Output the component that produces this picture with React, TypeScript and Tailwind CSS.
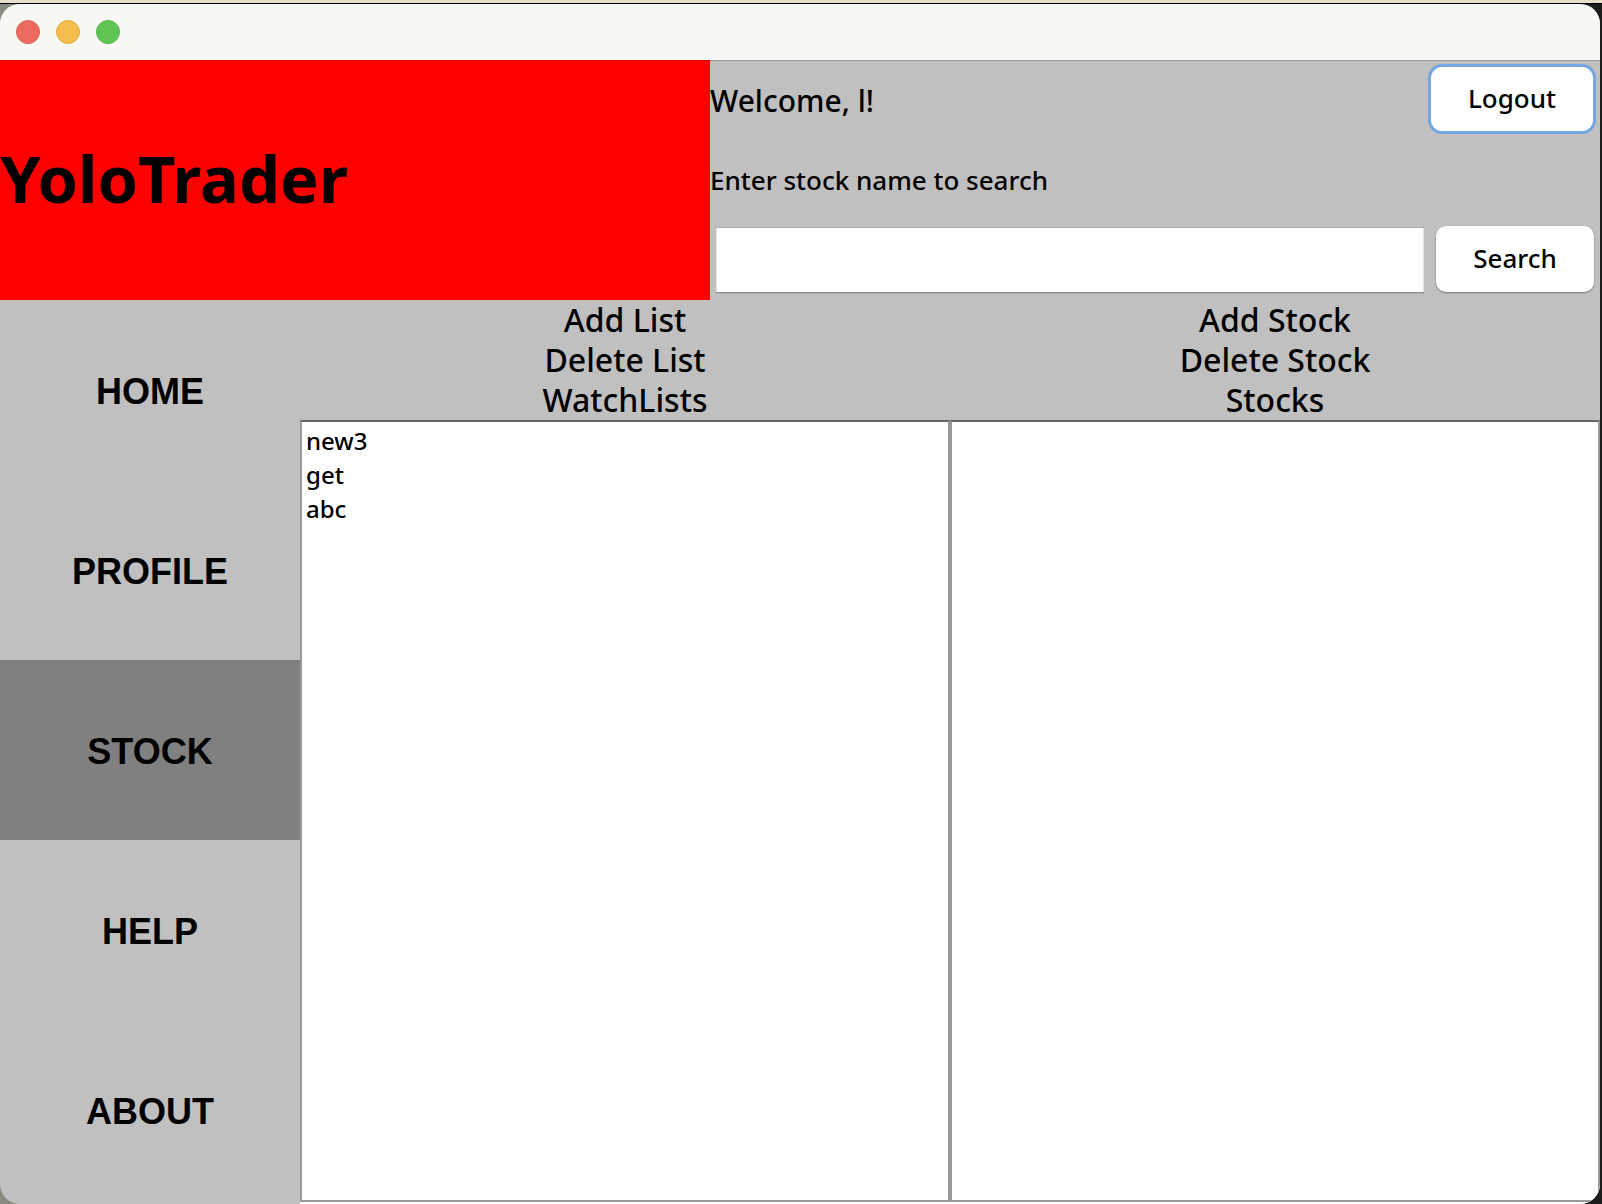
import { useState } from "react";

const navItems = ["HOME", "PROFILE", "STOCK", "HELP", "ABOUT"];
const watchLists = ["new3", "get", "abc"];
const stocks: string[] = [];

function TitleBar() {
  return (
    <div className="flex h-14 shrink-0 items-center gap-4 bg-[#f7f8f3] px-4">
      <button aria-label="Close" className="size-6 rounded-full border border-[#de5f55] bg-[#ec6a5e]" />
      <button aria-label="Minimize" className="size-6 rounded-full border border-[#dfaa45] bg-[#f4bf4f]" />
      <button aria-label="Zoom" className="size-6 rounded-full border border-[#55b347] bg-[#61c554]" />
    </div>
  );
}

function Header() {
  const [query, setQuery] = useState("");
  return (
    <header className="flex h-60 shrink-0 shadow-[inset_0_1px_0_#00000033]">
      <div className="flex w-[710px] shrink-0 items-center bg-[#ff0000] pb-1 shadow-[inset_0_1px_0_#00000033]">
        <h1 className="text-[65px] leading-[80px] font-bold">YoloTrader</h1>
      </div>
      <form className="grid min-w-0 flex-1 grid-rows-3" onSubmit={(e) => e.preventDefault()}>
        <div className="flex items-center justify-between pr-1">
          <p className="pt-0.5 text-[30px] leading-10 font-medium">Welcome, l!</p>
          <button
            type="button"
            className="mb-0.5 h-[70px] w-[168px] rounded-[14px] border-3 border-[#73a7e0] bg-white pb-0.5 text-[26px] leading-8 font-medium"
          >
            Logout
          </button>
        </div>
        <label htmlFor="stock-query" className="flex items-center text-[26px] leading-8 font-medium">
          Enter stock name to search
        </label>
        <div className="flex items-center gap-3 px-1.5">
          <input
            id="stock-query"
            value={query}
            onChange={(e) => setQuery(e.target.value)}
            className="h-16 min-w-0 flex-1 border-x border-[#e4e4e4] bg-white px-2 text-[26px] shadow-[0_1px_0_#8c8c8c,0_2px_0_#b0b0b0,0_-1px_0_#acacac] outline-none"
          />
          <button
            type="submit"
            className="mb-0.5 h-[66px] w-[158px] rounded-[10px] bg-white pb-0.5 text-[26px] leading-8 font-medium shadow-[0_1px_2px_#00000066]"
          >
            Search
          </button>
        </div>
      </form>
    </header>
  );
}

function Sidebar() {
  const [active, setActive] = useState("STOCK");
  return (
    <nav className="flex w-[300px] shrink-0 flex-col">
      {navItems.map((item) => (
        <button
          key={item}
          onClick={() => setActive(item)}
          className={`h-[180px] pt-1 font-['Liberation_Sans',sans-serif] text-4xl font-bold ${
            item === active ? "bg-[#808080]" : ""
          }`}
        >
          {item}
        </button>
      ))}
    </nav>
  );
}

type PanelProps = { actions: string[]; title: string; items: string[] };

function Panel({ actions, title, items }: PanelProps) {
  return (
    <section className="flex min-w-0 flex-1 flex-col">
      <div className="flex flex-col items-center text-[32px] leading-10 font-medium">
        {actions.map((action) => (
          <button key={action}>{action}</button>
        ))}
        <h2 className="font-medium">{title}</h2>
      </div>
      <ul className="flex-1 border-2 border-[#999999] border-t-[#666666] bg-white px-1 pt-0.5 text-2xl leading-[34px] font-medium">
        {items.map((item) => (
          <li key={item}>{item}</li>
        ))}
      </ul>
    </section>
  );
}

export default function App() {
  return (
    <div className="flex min-h-screen flex-col bg-[linear-gradient(90deg,#8a8a80,#6b6b6b_20%,#1c1c1c_90%)] font-['Noto_Sans',sans-serif] text-black">
      <div className="h-[3px] shrink-0 bg-[#e4e0cb]" />
      <div className="h-px shrink-0 bg-black" />
      <div className="mr-0.5 flex flex-1 flex-col overflow-hidden rounded-[20px] bg-[#c0c0c0]">
        <TitleBar />
        <Header />
        <div className="flex flex-1">
          <Sidebar />
          <main className="flex min-w-0 flex-1 border-b-2 border-white">
            <Panel actions={["Add List", "Delete List"]} title="WatchLists" items={watchLists} />
            <Panel actions={["Add Stock", "Delete Stock"]} title="Stocks" items={stocks} />
          </main>
        </div>
      </div>
    </div>
  );
}
